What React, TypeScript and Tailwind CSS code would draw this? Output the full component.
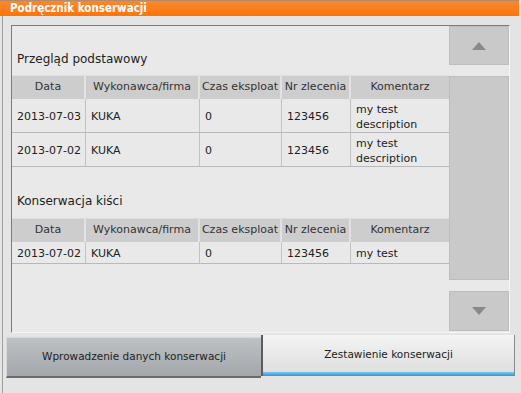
import React from "react";

const cols = [74, 114, 82, 69, 98];
const headers = ["Data", "Wykonawca/firma", "Czas eksploat", "Nr zlecenia", "Komentarz"];

type Row = string[];

function Table({ rows, rowH }: { rows: Row[]; rowH: string }) {
  return (
    <div className="flex flex-col">
      <div className="flex h-[24px] bg-[#cdcdcd] border-t border-[#dedede]">
        {headers.map((h, i) => (
          <div
            key={h}
            style={{ width: cols[i] }}
            className={`flex items-center justify-center whitespace-nowrap overflow-hidden text-[#333] ${i < 4 ? "border-r-2 border-[#e2e2e2]" : ""}`}
          >
            {h}
          </div>
        ))}
      </div>
      {rows.map((r, ri) => (
        <div key={ri} className={`flex ${rowH} border-b border-[#b9b9b9] bg-[#e9e9e9]`}>
          {r.map((c, i) => (
            <div
              key={i}
              style={{ width: cols[i] }}
              className={`flex items-center pl-[5px] pt-[2px] text-[#222] leading-[15px] ${i < 4 ? "border-r border-[#c2c2c2]" : ""}`}
            >
              <span className="whitespace-pre-line">{c}</span>
            </div>
          ))}
        </div>
      ))}
    </div>
  );
}

function Arrow({ down }: { down?: boolean }) {
  return (
    <svg width="14" height="8" viewBox="0 0 14 8">
      {down ? <polygon points="0,0 14,0 7,8" fill="#8a8a8a" /> : <polygon points="0,8 14,8 7,0" fill="#8a8a8a" />}
    </svg>
  );
}

export default function App() {
  return (
    <div
      className="w-[521px] h-[393px] bg-[#e4e4e4] overflow-hidden flex flex-col text-[11px]"
      style={{ fontFamily: '"DejaVu Sans", Tahoma, sans-serif' }}
    >
      <div className="h-[16px] shrink-0 border-t border-[#b98a6a] bg-gradient-to-b from-[#f58a2e] to-[#ff7400] flex items-center pl-[10px] mr-[2px]">
        <span
          className="text-white font-bold text-[11.5px] leading-none"
          style={{ fontFamily: '"DejaVu Sans Condensed", "DejaVu Sans", sans-serif', fontStretch: "condensed" }}
        >
          Podręcznik konserwacji
        </span>
      </div>
      <div className="flex-1 ml-[2px] border-l border-[#a0a0a0] flex flex-col">
        <div className="pt-[9px] pl-[8px]">
          <div className="w-[499px] h-[308px] border-t border-l border-[#7c7c7c] border-r border-b border-r-[#f6f6f6] border-b-[#f6f6f6] bg-[#e9e9e9] flex">
            <div className="w-[437px] flex flex-col">
              <div className="h-[26px]" />
              <div className="h-[14px] pl-[5px] leading-[14px] text-[12px] text-[#222]">Przegląd podstawowy</div>
              <div className="h-[9px]" />
              <Table
                rowH="h-[34px]"
                rows={[
                  ["2013-07-03", "KUKA", "0", "123456", "my test\ndescription"],
                  ["2013-07-02", "KUKA", "0", "123456", "my test\ndescription"],
                ]}
              />
              <div className="h-[27px]" />
              <div className="h-[14px] pl-[5px] leading-[14px] text-[12px] text-[#222]">Konserwacja kiści</div>
              <div className="h-[10px]" />
              <Table rowH="h-[22px]" rows={[["2013-07-02", "KUKA", "0", "123456", "my test"]]} />
            </div>
            <div className="w-[60px] flex flex-col">
              <div className="h-[39px] bg-[#c9c9c9] border border-[#bdbdbd] flex items-center justify-center">
                <Arrow />
              </div>
              <div className="h-[11px]" />
              <div className="h-[204px] bg-[#c9c9c9] border border-[#bdbdbd]" />
              <div className="h-[11px]" />
              <div className="h-[40px] bg-[#c9c9c9] border border-[#bdbdbd] flex items-center justify-center">
                <Arrow down />
              </div>
            </div>
          </div>
        </div>
        <div className="flex pl-[3px] pt-[2px] text-[10.5px]">
          <div className="w-[255px] h-[41px] mt-[2px] bg-gradient-to-b from-[#bec1c4] to-[#a3a7ab] border-l border-t border-[#d8d8d8] border-b-2 border-b-[#6a6a6a] flex items-center justify-center text-[#222]">
            Wprowadzenie danych konserwacji
          </div>
          <div className="w-[254px] h-[41px] border-l-2 border-[#5c5c5c] border-r border-r-[#8a8a8a] flex flex-col bg-gradient-to-b from-[#f4f4f4] to-[#dcdcdc]">
            <div className="flex-1 flex items-center justify-center text-[#222] pt-[2px]">Zestawienie konserwacji</div>
            <div className="h-[4px] bg-gradient-to-b from-[#7cc6f0] to-[#2b95d8]" />
          </div>
        </div>
      </div>
    </div>
  );
}
